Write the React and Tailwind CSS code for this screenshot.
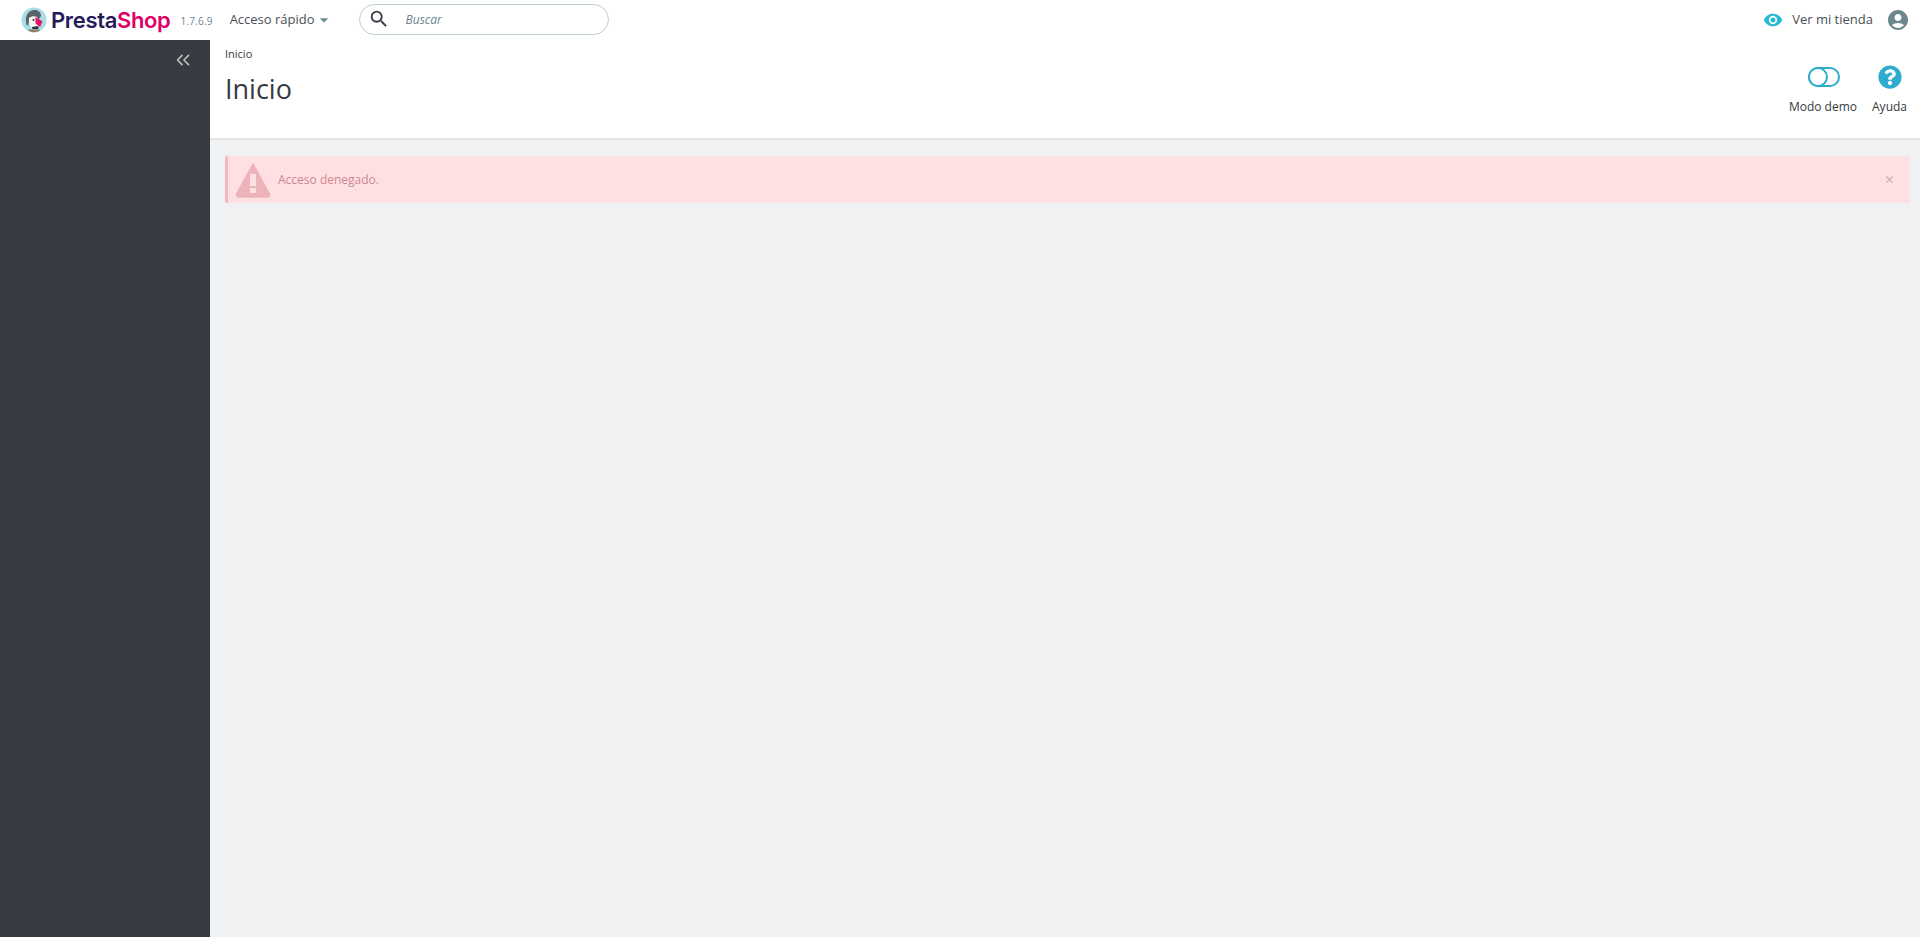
import React from "react";
import { ChevronsLeft, X } from "lucide-react";
import { MdRemoveRedEye, MdAccountCircle, MdArrowDropDown, MdSearch } from "react-icons/md";
import { FaQuestionCircle } from "react-icons/fa";

function Logo() {
  return (
    <svg width="26" height="26" viewBox="0 0 26 26">
      <circle cx="13" cy="13" r="12.500" fill="#a8dde6" />
      <path d="M5 15C4 8 8 3 13.500 3c4 0 6.500 2.500 6.500 6l-2 3H8.500L7 19c-1-1-2-2-2-4z" fill="#5a6366" />
      <path d="M8 11c2-2 6-2.500 8-1l1.500 3-1 8H10.500C8.500 19 7.500 15 8 11z" fill="#f5f5f0" />
      <path d="M14.500 10l7 4.500-2.500 5.500-4.500-3.500z" fill="#e8116d" />
      <path d="M11 20l6-1 .500 3h-6z" fill="#2f2f33" />
      <circle cx="12.500" cy="13" r="1" fill="#2f2f33" />
      <path d="M7.500 22.500h11l.5 1a12.500 12.500 0 0 1-12 0z" fill="#8b7d66" />
    </svg>
  );
}

function WarningIcon() {
  return (
    <svg width="36" height="36" viewBox="0 0 36 36" className="ml-[7px] shrink-0">
      <path d="M18 2 L34.500 32 Q35 35 32 35 L4 35 Q1 35 1.500 32 Z" fill="#ecb3b9" stroke="#ecb3b9" strokeWidth="1.500" strokeLinejoin="round" />
      <rect x="15" y="12" width="6" height="12" fill="#ffe0e2" />
      <rect x="15" y="26" width="6" height="5" fill="#ffe0e2" />
    </svg>
  );
}

function App() {
  return (
    <div className="flex flex-col h-[937px] overflow-hidden bg-[#eff1f2] font-['Open_Sans',sans-serif] text-[#363a41]">
      <header className="h-10 shrink-0 bg-white flex items-center">
        <div className="ml-[21px] flex items-center">
          <Logo />
          <span className="ml-[4px] font-['Inter',sans-serif] text-[22px] leading-none font-semibold tracking-[-0.35px]">
            <span className="text-[#251b5b]">Presta</span>
            <span className="text-[#df0067]">Shop</span>
          </span>
        </div>
        <span className="ml-[10px] mt-[3px] text-[10px] text-[#6c868e] tracking-[0.2px]">1.7.6.9</span>
        <div className="ml-[17px] flex items-center text-[13px] text-[#4a4e55]">
          <span>Acceso rápido</span>
          <MdArrowDropDown className="text-[20px] -ml-[1px] text-[#6c868e]" />
        </div>
        <div className="ml-[25px] mb-[2px] w-[250px] h-[31px] rounded-full border border-[#bbcdd2] flex items-center">
          <MdSearch className="ml-[8px] text-[22px] text-[#363a41]" />
          <span className="ml-[16px] mt-[2px] text-[12px] italic text-[#6c868e]">Buscar</span>
        </div>
        <div className="ml-auto mr-[10px] flex items-center">
          <MdRemoveRedEye className="text-[20px] text-[#25b9d7]" />
          <span className="ml-[9px] text-[13px] text-[#4a4e55]">Ver mi tienda</span>
          <MdAccountCircle className="ml-[13px] text-[24px] text-[#6c868e]" />
        </div>
      </header>
      <div className="flex flex-1 min-h-0">
        <aside className="w-[210px] shrink-0 bg-[#363a41] flex flex-col items-end">
          <ChevronsLeft className="mt-[9px] mr-[16px] w-[22px] h-[22px] text-[#bebebe]" strokeWidth={1.8} />
        </aside>
        <main className="flex-1 min-w-0">
          <div className="h-[100px] bg-white border-b-2 border-[#e4e4e4] flex justify-between">
            <div className="pl-[15px]">
              <div className="mt-[6px] text-[11px] leading-[16px]">Inicio</div>
              <h1 className="mt-[9px] text-[27px] leading-[36px] font-normal">Inicio</h1>
            </div>
            <div className="flex pr-[13px] pt-[27px] gap-[15px]">
              <div className="flex flex-col items-center">
                <div className="h-[20px] ml-[2px] flex items-center">
                  <div className="relative w-[32px] h-[20px] rounded-full border-2 border-[#2eacce]">
                    <div className="absolute -left-[2px] -top-[2px] w-[20px] h-[20px] rounded-full border-2 border-[#2eacce] bg-white" />
                  </div>
                </div>
                <span className="mt-[12px] text-[12px] leading-[16px]">Modo demo</span>
              </div>
              <div className="flex flex-col items-center">
                <FaQuestionCircle className="w-[24px] h-[24px] -mt-[2px] mb-[-2px] text-[#2eacce]" />
                <span className="mt-[12px] text-[12px] leading-[16px]">Ayuda</span>
              </div>
            </div>
          </div>
          <div className="mt-[16px] ml-[15px] mr-[10px] h-[47px] rounded-[2px] bg-[#ffe0e2] border-l-[3px] border-[#f3b9bf] flex items-center">
            <WarningIcon />
            <span className="ml-[7px] text-[12px] text-[#cd8790]">Acceso denegado.</span>
            <X className="ml-auto mr-[15px] w-[11px] h-[11px] text-[#c4b2b6]" strokeWidth={2.5} />
          </div>
        </main>
      </div>
    </div>
  );
}

export default App;
